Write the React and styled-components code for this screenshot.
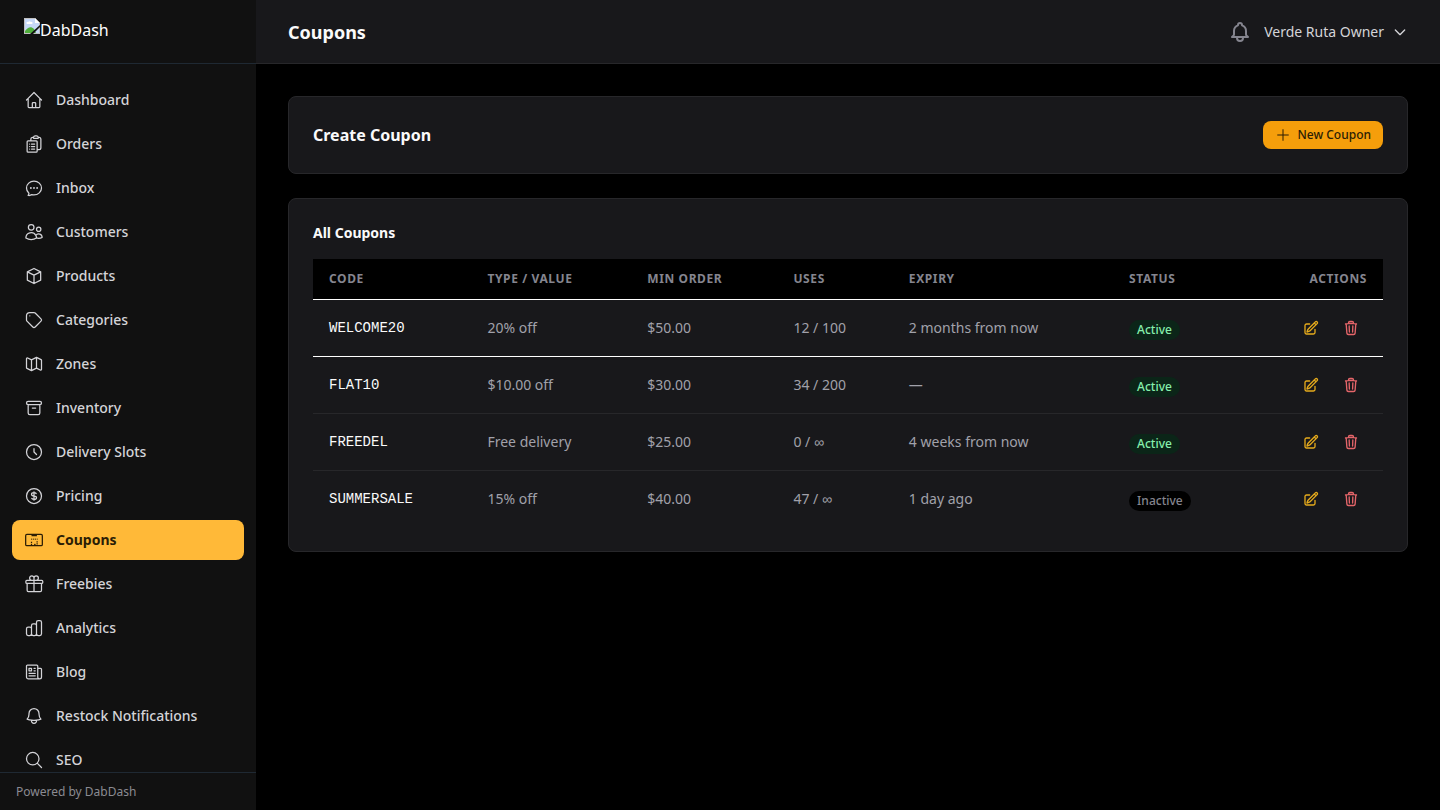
import styled, { createGlobalStyle, css } from 'styled-components';
import {
    HiOutlineBell,
    HiOutlineChatBubbleOvalLeftEllipsis,
    HiOutlineClipboardDocumentList,
    HiOutlineGift,
    HiOutlineMagnifyingGlass,
    HiOutlineNewspaper,
    HiOutlinePencilSquare,
    HiOutlineTrash,
    HiOutlineUsers,
} from 'react-icons/hi2';

const GlobalStyle = createGlobalStyle`
    *, *:before, *:after {
        box-sizing: border-box;
    }
    body {
        margin: 0;
        background: #000;
        color: #fafafa;
        font-family: 'Noto Sans', sans-serif;
        font-size: 14px;
        line-height: 20px;
    }
    button {
        font-family: inherit;
        border: none;
        cursor: pointer;
    }
`;

const Layout = styled.div`
    display: flex;
    height: 100vh;
`;

const Sidebar = styled.aside`
    display: flex;
    flex-direction: column;
    flex: 0 0 256px;
    background: #111;
`;

const Brand = styled.a`
    display: flex;
    align-items: flex-start;
    height: 64px;
    flex-shrink: 0;
    padding: 18px 24px;
    border-bottom: 1px solid #1f2933;
    color: #fff;
    font-size: 16px;
    line-height: 24px;
    text-decoration: none;
`;

const Nav = styled.nav`
    display: flex;
    flex-direction: column;
    flex: 1;
    gap: 4px;
    min-height: 0;
    padding: 16px 12px;
    overflow-y: auto;
    scrollbar-width: none;
`;

const NavLink = styled.a`
    display: flex;
    align-items: center;
    flex-shrink: 0;
    gap: 12px;
    height: 40px;
    padding: 0 12px;
    border-radius: 8px;
    color: #d4d4d8;
    font-weight: 500;
    text-decoration: none;
    svg {
        width: 20px;
        height: 20px;
    }
    ${({ $active }) =>
        $active &&
        css`
            background: #ffb938;
            color: #2b1d05;
            font-weight: 700;
        `}
`;

const SidebarFooter = styled.footer`
    padding: 11px 16px 10px;
    border-top: 1px solid #1f2933;
    color: #8b8b92;
    font-size: 12px;
    line-height: 16px;
`;

const Page = styled.div`
    display: flex;
    flex-direction: column;
    flex: 1;
    min-width: 0;
`;

const Header = styled.header`
    display: flex;
    align-items: center;
    justify-content: space-between;
    height: 64px;
    flex-shrink: 0;
    padding: 0 32px;
    background: #18181b;
    border-bottom: 1px solid #27272a;
`;

const Title = styled.h1`
    margin: 0;
    font-size: 18px;
    font-weight: 700;
    line-height: 28px;
`;

const HeaderActions = styled.div`
    display: flex;
    align-items: center;
    gap: 12px;
`;

const BellButton = styled.button`
    display: flex;
    padding: 0;
    background: none;
    color: #85858f;
`;

const UserButton = styled.button`
    display: flex;
    align-items: center;
    gap: 8px;
    padding: 0;
    background: none;
    color: #d4d4d8;
    font-size: 14px;
    line-height: 20px;
`;

const Main = styled.main`
    display: flex;
    flex-direction: column;
    flex: 1;
    gap: 24px;
    padding: 32px;
    overflow-y: auto;
`;

const Card = styled.section`
    padding: 24px;
    background: #18181b;
    border: 1px solid #27272a;
    border-radius: 8px;
`;

const CardRow = styled.div`
    display: flex;
    align-items: center;
    justify-content: space-between;
`;

const CardTitle = styled.h2`
    margin: 0;
    font-size: 16px;
    font-weight: 700;
    line-height: 24px;
`;

const TableTitle = styled.h3`
    margin: 0 0 16px;
    font-size: 14px;
    font-weight: 700;
    line-height: 20px;
`;

const PrimaryButton = styled.button`
    display: flex;
    align-items: center;
    gap: 6px;
    padding: 6px 12px;
    border-radius: 8px;
    background: #f59e0b;
    color: #2b1d05;
    font-size: 12px;
    font-weight: 500;
    line-height: 16px;
`;

const Table = styled.table`
    width: 100%;
    border-collapse: collapse;
`;

const Th = styled.th`
    padding: 12px 16px;
    background: #000;
    color: #85858f;
    font-size: 12px;
    font-weight: 700;
    line-height: 16px;
    letter-spacing: 0.05em;
    text-align: ${({ $right }) => ($right ? 'right' : 'left')};
    text-transform: uppercase;
`;

const HeadRow = styled.tr`
    border-bottom: 1px solid #fff;
`;

const Row = styled.tr`
    border-bottom: 1px solid ${({ $bright }) => ($bright ? '#fff' : '#27272a')};
    &:last-child {
        border-bottom: none;
    }
`;

const Td = styled.td`
    padding: 12px 16px;
    color: #a1a1aa;
`;

const CodeTd = styled(Td)`
    color: #fafafa;
    font-family: 'Liberation Mono', monospace;
`;

const StatusTd = styled(Td)`
    font-size: 16px;
    line-height: 24px;
`;

const Badge = styled.span`
    display: inline-flex;
    padding: 2px 8px;
    border-radius: 10px;
    background: ${({ $active }) => ($active ? '#0b2518' : '#000')};
    color: ${({ $active }) => ($active ? '#86efac' : '#85858f')};
    font-size: 12px;
    font-weight: 500;
    line-height: 16px;
`;

const RowActions = styled.div`
    display: flex;
    justify-content: flex-end;
    gap: 8px;
`;

const IconButton = styled.button`
    display: flex;
    padding: 8px;
    background: none;
    color: ${({ $danger }) => ($danger ? '#e5656a' : '#e5aa1c')};
    svg {
        width: 16px;
        height: 16px;
        stroke-width: 2;
    }
`;

const StrokeIcon = ({ size = 20, width = 1.5, d }) => (
    <svg
        width={size}
        height={size}
        viewBox="0 0 24 24"
        fill="none"
        stroke="currentColor"
        strokeWidth={width}
        strokeLinecap="round"
        strokeLinejoin="round"
        aria-hidden="true"
    >
        <path d={d} />
    </svg>
);

const TicketIcon = () => (
    <svg viewBox="0 0 24 24" fill="none" stroke="currentColor" strokeWidth="1.5" strokeLinejoin="round" aria-hidden="true">
        <rect x="2" y="5.25" width="20" height="13.5" rx="1.5" />
        <path d="M9 6.75h6.5" />
        <path d="M8.5 11h8" strokeWidth="1.2" strokeDasharray="1.4 1" />
        <path d="M9 14.2v4M15.75 13.5v5" strokeDasharray="1.4 1" />
        <path d="M12 17.25h2" strokeWidth="1.2" />
    </svg>
);

const MissingImage = () => (
    <svg width="16" height="16" viewBox="0 0 16 16" aria-hidden="true">
        <path d="M0 0h11l5 5v11H0z" fill="#c0c0c0" />
        <path d="M1 1h10v4h4v10H1z" fill="#c6d8f8" />
        <path d="M3 6a1 1 0 0 1 1-2 2 2 0 0 1 3 0 1 1 0 0 1 1 2z" fill="#fff" />
        <path d="M1 15v-2c3-4 6-5 9-2l2 4z" fill="#4fae3b" />
        <path d="M11 0v5h5z" fill="#fff" />
        <path d="M16 7v2l-7 7H6z" fill="#111" />
    </svg>
);

const paths = {
    home: 'M3 12l2-2m0 0l7-7 7 7M5 10v10a1 1 0 001 1h3m10-11l2 2m-2-2v10a1 1 0 01-1 1h-3m-6 0a1 1 0 001-1v-4a1 1 0 011-1h2a1 1 0 011 1v4a1 1 0 001 1m-6 0h6',
    cube: 'M20 7l-8-4-8 4m16 0l-8 4m8-4v10l-8 4m0-10L4 7m8 4v10M4 7v10l8 4',
    tag: 'M7 7h.01M7 3h5c.512 0 1.024.195 1.414.586l7 7a2 2 0 010 2.828l-7 7a2 2 0 01-2.828 0l-7-7A1.994 1.994 0 013 12V7a4 4 0 014-4z',
    map: 'M9 20l-5.447-2.724A1 1 0 013 16.382V5.618a1 1 0 011.447-.894L9 7m0 13l6-3m-6 3V7m6 10l4.553 2.276A1 1 0 0021 18.382V7.618a1 1 0 00-.553-.894L15 4m0 13V4m0 0L9 7',
    archive: 'M5 8h14M5 8a2 2 0 110-4h14a2 2 0 110 4M5 8v10a2 2 0 002 2h10a2 2 0 002-2V8m-9 4h4',
    clock: 'M12 8v4l3 3m6-3a9 9 0 11-18 0 9 9 0 0118 0z',
    dollar: 'M12 8c-1.657 0-3 .895-3 2s1.343 2 3 2 3 .895 3 2-1.343 2-3 2m0-8c1.11 0 2.08.402 2.599 1M12 8V7m0 1v8m0 0v1m0-1c-1.11 0-2.08-.402-2.599-1M21 12a9 9 0 11-18 0 9 9 0 0118 0z',
    chart: 'M9 19v-6a2 2 0 00-2-2H5a2 2 0 00-2 2v6a2 2 0 002 2h2a2 2 0 002-2zm0 0V9a2 2 0 012-2h2a2 2 0 012 2v10m-6 0a2 2 0 002 2h2a2 2 0 002-2m0 0V5a2 2 0 012-2h2a2 2 0 012 2v14a2 2 0 01-2 2h-2a2 2 0 01-2-2z',
    bell: 'M15 17h5l-1.405-1.405A2.032 2.032 0 0118 14.158V11a6.002 6.002 0 00-4-5.659V5a2 2 0 10-4 0v.341C7.67 6.165 6 8.388 6 11v3.159c0 .538-.214 1.055-.595 1.436L4 17h5m6 0v1a3 3 0 11-6 0v-1m6 0H9',
};

const navItems = [
    { label: 'Dashboard', icon: <StrokeIcon d={paths.home} /> },
    { label: 'Orders', icon: <HiOutlineClipboardDocumentList /> },
    { label: 'Inbox', icon: <HiOutlineChatBubbleOvalLeftEllipsis /> },
    { label: 'Customers', icon: <HiOutlineUsers /> },
    { label: 'Products', icon: <StrokeIcon d={paths.cube} /> },
    { label: 'Categories', icon: <StrokeIcon d={paths.tag} /> },
    { label: 'Zones', icon: <StrokeIcon d={paths.map} /> },
    { label: 'Inventory', icon: <StrokeIcon d={paths.archive} /> },
    { label: 'Delivery Slots', icon: <StrokeIcon d={paths.clock} /> },
    { label: 'Pricing', icon: <StrokeIcon d={paths.dollar} /> },
    { label: 'Coupons', icon: <TicketIcon />, active: true },
    { label: 'Freebies', icon: <HiOutlineGift /> },
    { label: 'Analytics', icon: <StrokeIcon d={paths.chart} /> },
    { label: 'Blog', icon: <HiOutlineNewspaper /> },
    { label: 'Restock Notifications', icon: <HiOutlineBell /> },
    { label: 'SEO', icon: <HiOutlineMagnifyingGlass /> },
];

const coupons = [
    { code: 'WELCOME20', value: '20% off', min: '$50.00', uses: '12 / 100', expiry: '2 months from now', active: true },
    { code: 'FLAT10', value: '$10.00 off', min: '$30.00', uses: '34 / 200', expiry: '—', active: true },
    { code: 'FREEDEL', value: 'Free delivery', min: '$25.00', uses: '0 / ∞', expiry: '4 weeks from now', active: true },
    { code: 'SUMMERSALE', value: '15% off', min: '$40.00', uses: '47 / ∞', expiry: '1 day ago', active: false },
];

function App() {
    return (
        <Layout>
            <GlobalStyle />
            <Sidebar>
                <Brand href="#">
                    <MissingImage />
                    DabDash
                </Brand>
                <Nav>
                    {navItems.map(({ label, icon, active }) => (
                        <NavLink key={label} href="#" $active={active} aria-current={active ? 'page' : undefined}>
                            {icon}
                            {label}
                        </NavLink>
                    ))}
                </Nav>
                <SidebarFooter>Powered by DabDash</SidebarFooter>
            </Sidebar>
            <Page>
                <Header>
                    <Title>Coupons</Title>
                    <HeaderActions>
                        <BellButton aria-label="Notifications">
                            <StrokeIcon size={24} width={2} d={paths.bell} />
                        </BellButton>
                        <UserButton>
                            Verde Ruta Owner
                            <StrokeIcon size={16} width={2} d="M19 9l-7 7-7-7" />
                        </UserButton>
                    </HeaderActions>
                </Header>
                <Main>
                    <Card>
                        <CardRow>
                            <CardTitle>Create Coupon</CardTitle>
                            <PrimaryButton>
                                <StrokeIcon size={16} d="M12 4v16m8-8H4" />
                                New Coupon
                            </PrimaryButton>
                        </CardRow>
                    </Card>
                    <Card>
                        <TableTitle>All Coupons</TableTitle>
                        <Table>
                            <thead>
                                <HeadRow>
                                    <Th>Code</Th>
                                    <Th>Type / Value</Th>
                                    <Th>Min Order</Th>
                                    <Th>Uses</Th>
                                    <Th>Expiry</Th>
                                    <Th>Status</Th>
                                    <Th $right>Actions</Th>
                                </HeadRow>
                            </thead>
                            <tbody>
                                {coupons.map((coupon, i) => (
                                    <Row key={coupon.code} $bright={i === 0}>
                                        <CodeTd>{coupon.code}</CodeTd>
                                        <Td>{coupon.value}</Td>
                                        <Td>{coupon.min}</Td>
                                        <Td>{coupon.uses}</Td>
                                        <Td>{coupon.expiry}</Td>
                                        <StatusTd>
                                            <Badge $active={coupon.active}>{coupon.active ? 'Active' : 'Inactive'}</Badge>
                                        </StatusTd>
                                        <Td>
                                            <RowActions>
                                                <IconButton aria-label={`Edit ${coupon.code}`}>
                                                    <HiOutlinePencilSquare />
                                                </IconButton>
                                                <IconButton $danger aria-label={`Delete ${coupon.code}`}>
                                                    <HiOutlineTrash />
                                                </IconButton>
                                            </RowActions>
                                        </Td>
                                    </Row>
                                ))}
                            </tbody>
                        </Table>
                    </Card>
                </Main>
            </Page>
        </Layout>
    );
}

export default App;
